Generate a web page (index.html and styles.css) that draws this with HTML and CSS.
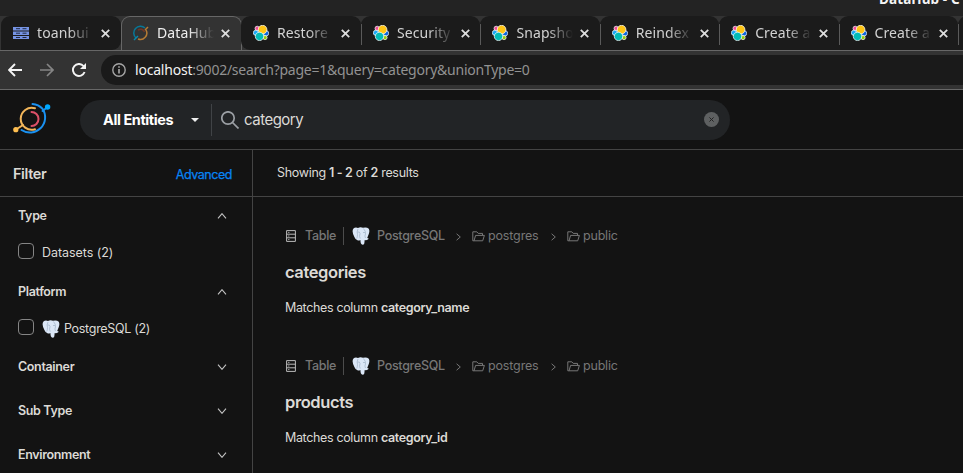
FILE: index.html
```
<!DOCTYPE html>
<html lang="en">
<head>
<meta charset="utf-8">
<title>DataHub</title>
<link rel="stylesheet" href="styles.css">
</head>
<body>
<svg class="defs" width="0" height="0">
  <symbol id="elastic" viewBox="0 0 16 16">
    <circle cx="4.2" cy="3.4" r="2.2" fill="#f04e98" stroke="#fff" stroke-width=".7"/>
    <circle cx="2.9" cy="7.8" r="2.6" fill="#1ba9f5" stroke="#fff" stroke-width=".7"/>
    <circle cx="13" cy="8.3" r="2.7" fill="#0b64dd" stroke="#fff" stroke-width=".7"/>
    <circle cx="12" cy="12.6" r="2.1" fill="#93c90e" stroke="#fff" stroke-width=".7"/>
    <circle cx="9.6" cy="4.6" r="4.3" fill="#fec514" stroke="#fff" stroke-width=".7"/>
    <circle cx="6.5" cy="11.4" r="4.2" fill="#02bcb7" stroke="#fff" stroke-width=".7"/>
  </symbol>
  <symbol id="close" viewBox="0 0 8 8"><path d="M.7.7l6.600 6.600M7.300.7L.7 7.300" fill="none" stroke="currentColor" stroke-width="1.600"/></symbol>
  <symbol id="logo" viewBox="0 0 38 34">
    <g fill="none" stroke-width="2" stroke-linecap="round">
      <path d="M19.500 2A15.200 15.200 0 0 1 29.500 6.800A15.200 15.200 0 0 1 8.500 28" stroke="#1a91f0"/>
      <path d="M29.500 9L34 5.500" stroke="#1a91f0"/>
      <path d="M22 6.300A11 11 0 1 0 22 27.300" stroke="#f2b65a"/>
      <path d="M3 27.500L10 23" stroke="#f2b65a"/>
      <path d="M18.500 10A7 7 0 0 1 18.500 24" stroke="#dc5068"/>
    </g>
    <circle cx="34.600" cy="5" r="2.700" fill="#00a8ff"/><circle cx="2.800" cy="27.700" r="2.600" fill="#ffbf50"/>
  </symbol>
  <symbol id="postgres" viewBox="0 0 18 18">
    <path d="M1.500 1.600Q3 0 6 .9Q8.500-.2 11 .8Q14.500-.3 16.800 1.700Q18 4 16.700 7.200L15.200 11Q17.500 11 16.200 12.200Q14.500 13.500 12.700 13L12.300 16.500Q11.700 18 10 17.600Q8.500 17 8.400 13Q6.500 14 5.500 13.200Q3.600 13.200 2.400 10Q-.7 4 1.500 1.600Z" fill="#dbe7f7"/>
    <path d="M6 2Q4.500 5 5.500 7.500Q5.500 10 4.700 11.500M5.500 5Q8 4.500 8 6.500Q7 9.500 8.200 11.500M11.500 1.500Q14 4.500 13.500 7Q12.300 9 13.500 11M11 5.500h2" fill="none" stroke="#9fb2c6" stroke-width=".7"/>
  </symbol>
  <symbol id="chev" viewBox="0 0 10 6"><path d="M1 .6L5 5.300L9 .6" fill="none" stroke="currentColor" stroke-width="1.100"/></symbol>
  <symbol id="right" viewBox="0 0 5 8"><path d="M.6.8L4.300 4L.6 7.200" fill="none" stroke="currentColor"/></symbol>
  <symbol id="folder" viewBox="0 0 13 11"><path d="M2 9.800H.8V.8H4.800L6.200 2.400H10.500V4.300M2 9.800L3.600 4.400H12.400L10.700 9.800Z" fill="none" stroke="currentColor" stroke-width="1"/></symbol>
  <symbol id="table" viewBox="0 0 10 12"><path d="M.6.6H9.400V11.400H.6ZM.6 4.200H9.400M.6 7.800H9.400M2.200 2.400h1.200M2.200 6h1.200M2.200 9.600h1.200" fill="none" stroke="#bababa" stroke-width="1"/></symbol>
</svg>

<div class="titlebar"><span>DataHub - C</span></div>
<nav class="tabs">
  <div class="tab"><svg class="fav" viewBox="0 0 16 16"><path d="M0 2h16v3.500H0zM0 6.500h16v3.500H0zM0 11h16v3H0z" fill="#7694e4"/><path d="M3 3.700h4M9.500 3.700h4M3 8.200h4M9.500 8.200h4M3 12.500h4M9.500 12.500h4" stroke="#222a46"/></svg><span>toanbui</span><svg class="x"><use href="#close"/></svg></div>
  <div class="tab active"><svg class="fav" viewBox="0 0 16 16"><g fill="none" stroke-width="1.500"><path d="M3 13A6.400 6.400 0 0 1 12 3" stroke="#087797"/><path d="M13 5A6.400 6.400 0 0 1 5 14M12 5L15 2" stroke="#b47b35"/><path d="M5 5Q10 3 11.500 7" stroke="#713626"/><path d="M1 15l4-4" stroke="#0789ad"/></g></svg><span>DataHub</span><svg class="x"><use href="#close"/></svg></div>
  <div class="tab plain"><svg class="fav"><use href="#elastic"/></svg><span>Restore</span><svg class="x"><use href="#close"/></svg></div>
  <div class="tab"><svg class="fav"><use href="#elastic"/></svg><span>Security</span><svg class="x"><use href="#close"/></svg></div>
  <div class="tab"><svg class="fav"><use href="#elastic"/></svg><span>Snapsho</span><svg class="x"><use href="#close"/></svg></div>
  <div class="tab"><svg class="fav"><use href="#elastic"/></svg><span>Reindex</span><svg class="x"><use href="#close"/></svg></div>
  <div class="tab"><svg class="fav"><use href="#elastic"/></svg><span>Create a</span><svg class="x"><use href="#close"/></svg></div>
  <div class="tab"><svg class="fav"><use href="#elastic"/></svg><span>Create a</span><svg class="x"><use href="#close"/></svg></div>
  <div class="tab"></div>
</nav>
<div class="toolbar">
  <svg class="nav" viewBox="0 0 14 14"><path d="M14 7H1.500M7 1L1 7l6 6" fill="none" stroke="#f4f4f4" stroke-width="1.900"/></svg>
  <svg class="nav" viewBox="0 0 14 14"><path d="M0 7h12.500M7 1l6 6l-6 6" fill="none" stroke="#858585" stroke-width="1.700"/></svg>
  <svg class="nav" viewBox="0 0 14 14"><path d="M12.600 9A6 6 0 1 1 11.500 3L13 4.700" fill="none" stroke="#f4f4f4" stroke-width="1.900"/><path d="M14 0v6H8z" fill="#f4f4f4"/></svg>
  <div class="address"><svg viewBox="0 0 14 14"><circle cx="7" cy="7" r="6.200" fill="none" stroke="#a5a5a5" stroke-width="1.400"/><path d="M7 6v4.500M7 3.300v1.500" stroke="#b5b5b5" stroke-width="1.500"/></svg><div class="url"><b>localhost</b>:9002/search?page=1&amp;query=category&amp;unionType=0</div></div>
</div>

<header class="header">
  <svg class="logo"><use href="#logo"/></svg>
  <div class="search">
    <span class="entities">All Entities</span><i class="caret"></i>
    <div class="query"><svg viewBox="0 0 18 18"><circle cx="7" cy="7" r="6.200"/><path d="M11.500 11.500L17.500 17.500"/></svg><span>category</span></div>
    <span class="clear"><svg><use href="#close"/></svg></span>
  </div>
</header>
<div class="main">
  <aside>
    <div class="bar"><span class="filter">Filter</span><span class="advanced">Advanced</span></div>
    <div class="facets">
      <div class="facet open"><b>Type</b><svg><use href="#chev"/></svg></div>
      <div class="option"><i class="box"></i><span class="datasets">Datasets (2)</span></div>
      <div class="facet open"><b>Platform</b><svg><use href="#chev"/></svg></div>
      <div class="option"><i class="box"></i><svg class="pg"><use href="#postgres"/></svg><span>PostgreSQL (2)</span></div>
      <div class="facet"><b>Container</b><svg><use href="#chev"/></svg></div>
      <div class="facet"><b>Sub Type</b><svg><use href="#chev"/></svg></div>
      <div class="facet"><b>Environment</b><svg><use href="#chev"/></svg></div>
    </div>
  </aside>
  <main>
    <div class="bar summary"><span>Showing <b>1 - 2</b> of <b>2</b> results</span></div>
    <div class="results">
      <article>
        <div class="crumbs"><svg class="tbl"><use href="#table"/></svg><span class="kind">Table</span><svg class="pg"><use href="#postgres"/></svg><span class="plat">PostgreSQL</span><svg class="right"><use href="#right"/></svg><svg class="folder"><use href="#folder"/></svg><span class="db">postgres</span><svg class="right"><use href="#right"/></svg><svg class="folder"><use href="#folder"/></svg><span class="schema">public</span></div>
        <h2>categories</h2>
        <p>Matches column <b>category_name</b></p>
      </article>
      <article>
        <div class="crumbs"><svg class="tbl"><use href="#table"/></svg><span class="kind">Table</span><svg class="pg"><use href="#postgres"/></svg><span class="plat">PostgreSQL</span><svg class="right"><use href="#right"/></svg><svg class="folder"><use href="#folder"/></svg><span class="db">postgres</span><svg class="right"><use href="#right"/></svg><svg class="folder"><use href="#folder"/></svg><span class="schema">public</span></div>
        <h2>products</h2>
        <p>Matches column <b>category_id</b></p>
      </article>
    </div>
  </main>
</div>
</body>
</html>
```
FILE: styles.css
```
* { box-sizing: border-box; }
body { margin: 0; height: 473px; overflow: hidden; background: #131313; color: #dcdad6; font: 12.5px Inter, sans-serif; letter-spacing: -.3px; display: flex; flex-direction: column; }
svg { display: block; flex: none; }
.defs { position: absolute; }
b { font-weight: 600; letter-spacing: -.35px; }
span { white-space: nowrap; }

.titlebar { height: 16px; flex: none; background: #232323; overflow: hidden; }
.titlebar span { display: block; margin: -10px 0 0 879px; font: bold 13.5px/18px "Noto Sans", sans-serif; letter-spacing: .1px; color: #f4f4f4; }
.tabs { height: 35px; flex: none; display: flex; background: #333; border-bottom: 1px solid #676767; padding-left: 1px; overflow: hidden; }
.tab { width: 119.400px; flex: none; display: flex; align-items: center; padding: 0 0 0 12px; background: #1b1b1b linear-gradient(#5a5a5a, #5a5a5a) no-repeat 0 8px / 1px 21px; border-radius: 9px 9px 0 0; color: #d2d2d2; font: 14px/20px "Noto Sans", sans-serif; letter-spacing: .1px; }
.tab:first-child, .tab.plain { background-image: none; }
.tab:first-child { width: 120px; border-radius: 9px 9px 9px 0; }
.tab.plain { width: 120px; border-radius: 9px 9px 0 9px; }
.tab.active { background: #333; border: 1px solid #676767; border-bottom: 0; height: 36px; width: 121px; margin-right: -1px; padding: 0 0 3px 11px; color: #eee; }
.fav { width: 16px; height: 16px; margin-right: 8px; }
.tab span { width: 57px; margin-right: 7px; -webkit-mask-image: linear-gradient(90deg, #000 55%, transparent 100%); mask-image: linear-gradient(90deg, #000 55%, transparent 100%); }
.tab .x { width: 9px; height: 9px; color: #ddd; }

.toolbar { height: 39px; flex: none; display: flex; align-items: center; background: #333; border-bottom: 1px solid #686868; padding-left: 8px; }
.nav { width: 14px; height: 14px; margin-right: 18px; }
.nav + .nav + .nav { margin-right: 15px; }
.address { flex: 1; height: 30px; background: #1a1a1a; border-radius: 15px 0 0 15px; display: flex; align-items: center; padding-left: 11px; }
.address svg { width: 14px; height: 14px; margin-right: 9px; }
.url { font: 14px/20px "Noto Sans", sans-serif; color: #929292; letter-spacing: -.25px; }
.url b { font-weight: 400; color: #f2f2f2; letter-spacing: -.2px; }

.header { height: 60px; flex: none; display: flex; align-items: center; border-bottom: 1px solid #444; padding-left: 13px; }
.logo { width: 38px; height: 34px; margin-right: 29px; margin-top: -2px; }
.search { width: 650px; height: 40px; border-radius: 20px; background: #222426; display: flex; align-items: center; padding: 0 11px 0 23px; }
.entities { width: 70px; font-size: 14.5px; font-weight: 700; color: #fff; letter-spacing: -.42px; }
.caret { margin-left: 18px; border: 4px solid transparent; border-top-color: #eee; border-bottom: 0; }
.query { flex: 1; height: 32px; margin-left: 12px; border-left: 1px solid #404346; display: flex; align-items: center; padding-left: 9px; font-size: 15px; letter-spacing: -.5px; }
.query svg { width: 18px; height: 18px; fill: none; stroke: #9b9fa4; stroke-width: 1.700; margin-right: 5px; }
.clear { width: 15px; height: 15px; border-radius: 50%; background: #5e6061; color: #222; display: flex; align-items: center; justify-content: center; }
.clear svg { width: 5px; height: 5px; }

.main { flex: 1; min-height: 0; display: flex; }
aside { width: 253px; border-right: 1px solid #444; flex: none; }
main { flex: 1; }
.bar { height: 47px; border-bottom: 1px solid #444; display: flex; align-items: center; justify-content: space-between; padding: 2px 20px 0 13px; }
.filter { font-size: 14.5px; font-weight: 600; margin-top: -2px; letter-spacing: -.4px; }
.advanced { color: #0783f4; -webkit-text-stroke: .25px; letter-spacing: -.45px; }
.summary { padding: 0 0 1px 24px; }
.facets { padding: 7px 25px 0 18px; }
.facet { height: 22px; margin-bottom: 22px; display: flex; align-items: center; justify-content: space-between; }
.facet.open { margin-bottom: 0; }
.facet svg { width: 10px; height: 6px; color: #c5c5c5; margin-top: 2px; }
.facet.open svg { transform: scaleY(-1); }
.option { height: 54px; padding-bottom: 4px; display: flex; align-items: center; }
.option:nth-child(4) { height: 53px; padding-bottom: 3px; }
.box { width: 16px; height: 16px; border: 1px solid #858585; border-radius: 4px; margin-right: 8px; }
.option span { padding-top: 3px; }
.option .datasets { letter-spacing: -.05px; }
.option .pg { margin-right: 4px; margin-top: 3px; }
.pg { width: 18px; height: 18px; }

.results { padding: 29px 0 0 32px; }
article { height: 130px; }
.crumbs { height: 20px; display: flex; align-items: center; color: #777; }
.crumbs span { height: 18px; line-height: 18px; }
.tbl { width: 10px; height: 12px; margin: 0 9px 0 1px; }
.crumbs .kind { width: 39px; border-right: 1px solid #4c4c4c; font-weight: 500; margin-right: 8px; }
.plat { width: 69px; margin-left: 7px; font-weight: 500; }
.right { width: 5px; height: 8px; margin: 2px 11px 0 10px; }
.folder { width: 13px; height: 11px; margin-right: 3px; }
.db { width: 53px; letter-spacing: -.15px; }
.schema { letter-spacing: -.2px; }
h2 { margin: 15px 0 0; font-size: 16.5px; line-height: 22px; font-weight: 600; letter-spacing: -.4px; }
p { margin: 16px 0 0; line-height: 18px; letter-spacing: -.35px; }
```
